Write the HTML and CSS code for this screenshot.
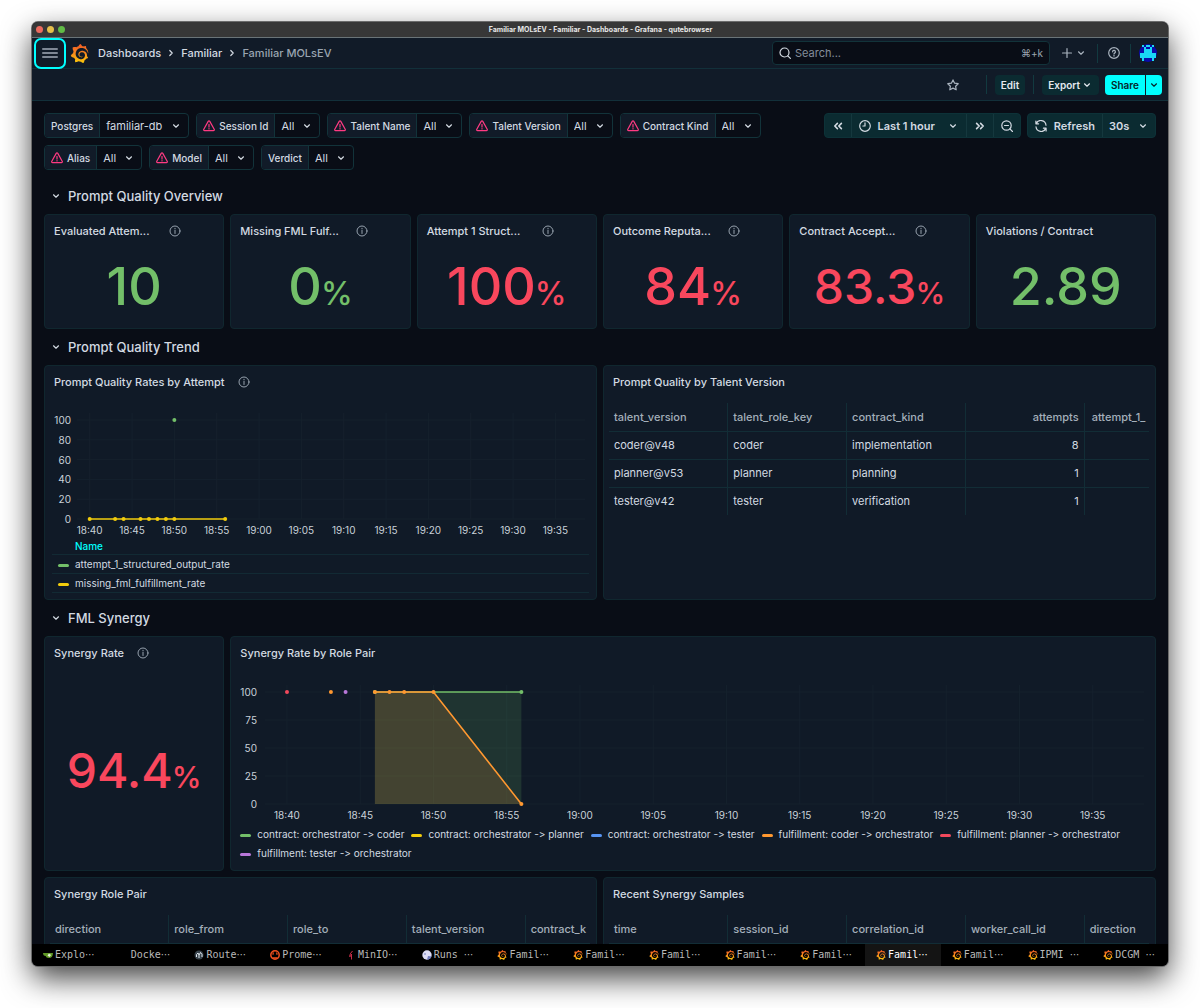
FILE: index.html
```html
<!DOCTYPE html>
<html lang="en">
<head>
  <meta charset="UTF-8" />
  <meta name="viewport" content="width=device-width, initial-scale=1.0" />
  <title>Familiar MOLsEV - Familiar - Dashboards - Grafana</title>
  <link rel="stylesheet" href="styles.css">
</head>
<body>
  <!-- icon sprite -->
  <svg class="sprite" aria-hidden="true">
    <linearGradient id="flame" x1="0" y1="0" x2="0" y2="1">
      <stop offset="0" stop-color="#f05a28" />
      <stop offset="0.45" stop-color="#f7841d" />
      <stop offset="1" stop-color="#fbca0a" />
    </linearGradient>
    <symbol id="grafana" viewBox="0 0 24 24">
      <path fill="url(#flame)" d="M23.02 10.59a8.578 8.578 0 0 0-.862-3.034 8.911 8.911 0 0 0-1.789-2.445c.337-1.342-.413-2.505-.413-2.505-1.292-.08-2.113.4-2.416.62-.052-.02-.102-.044-.154-.064-.22-.089-.446-.172-.677-.247-.231-.073-.47-.14-.711-.197a9.867 9.867 0 0 0-.875-.161C14.557.753 12.94 0 12.94 0c-1.804 1.145-2.147 2.744-2.147 2.744l-.018.093c-.098.029-.2.057-.298.088-.138.042-.275.094-.413.143-.138.055-.275.107-.41.166a8.869 8.869 0 0 0-1.557.87l-.063-.029c-2.497-.955-4.716.195-4.716.195-.203 2.658.996 4.33 1.235 4.636a11.608 11.608 0 0 0-.607 2.635C1.636 12.677.953 15.014.953 15.014c1.926 2.214 4.171 2.351 4.171 2.351.003-.002.006-.002.006-.005.285.509.615.994.986 1.446.156.19.32.371.488.548-.704 2.009.099 3.68.099 3.68 2.144.08 3.553-.937 3.849-1.173a9.784 9.784 0 0 0 3.164.501h.08l.055-.003.107-.002.103-.005.003.002c1.01 1.44 2.788 1.646 2.788 1.646 1.264-1.332 1.337-2.653 1.337-2.94v-.058c0-.02-.003-.039-.003-.06.265-.187.52-.387.758-.6a7.875 7.875 0 0 0 1.415-1.7c1.43.083 2.437-.885 2.437-.885-.236-1.49-1.085-2.216-1.264-2.354l-.018-.013-.016-.013a.217.217 0 0 1-.031-.02c.008-.092.016-.18.02-.27.011-.162.016-.323.016-.48v-.253l-.005-.098-.008-.135a1.891 1.891 0 0 0-.01-.13c-.003-.042-.008-.083-.013-.125l-.016-.124-.018-.122a6.215 6.215 0 0 0-2.032-3.73 6.015 6.015 0 0 0-3.222-1.46 6.292 6.292 0 0 0-.85-.048l-.107.002h-.063l-.044.003-.104.008a4.777 4.777 0 0 0-3.335 1.695c-.332.4-.592.84-.768 1.297a4.594 4.594 0 0 0-.312 1.817l.003.091c.005.055.007.11.013.164a3.615 3.615 0 0 0 .698 1.82 3.53 3.53 0 0 0 1.827 1.282c.33.098.66.14.971.137.039 0 .078 0 .114-.002l.063-.003c.02 0 .041-.003.062-.003.034-.002.065-.007.099-.01.007 0 .018-.003.028-.003l.031-.005.06-.008a1.18 1.18 0 0 0 .112-.02c.036-.008.072-.013.109-.024a2.634 2.634 0 0 0 .914-.415c.028-.02.056-.041.085-.065a.248.248 0 0 0 .039-.35.244.244 0 0 0-.309-.06l-.078.042c-.09.044-.184.083-.283.116a2.476 2.476 0 0 1-.475.096c-.028.003-.054.006-.083.006l-.083.002c-.026 0-.054 0-.08-.002l-.102-.006h-.012l-.024.006c-.016-.003-.031-.003-.044-.006-.031-.002-.06-.007-.091-.01a2.59 2.59 0 0 1-.724-.213 2.557 2.557 0 0 1-.667-.438 2.52 2.52 0 0 1-.805-1.475 2.306 2.306 0 0 1-.029-.444l.006-.122v-.023l.002-.031c.003-.021.003-.04.005-.06a3.163 3.163 0 0 1 1.352-2.29 3.12 3.12 0 0 1 .937-.43 2.946 2.946 0 0 1 .776-.101h.06l.07.002.045.003h.026l.07.005a4.041 4.041 0 0 1 1.635.49 3.94 3.94 0 0 1 1.602 1.662 3.77 3.77 0 0 1 .397 1.414l.005.076.003.075c.002.026.002.05.002.075 0 .024.003.052 0 .07v.065l-.002.073-.008.174a6.195 6.195 0 0 1-.08.639 5.1 5.1 0 0 1-.267.927 5.31 5.31 0 0 1-.624 1.13 5.052 5.052 0 0 1-3.237 2.014 4.82 4.82 0 0 1-.649.066l-.039.003h-.287a6.607 6.607 0 0 1-1.716-.265 6.776 6.776 0 0 1-3.4-2.274 6.75 6.75 0 0 1-.746-1.15 6.616 6.616 0 0 1-.714-2.596l-.005-.083-.002-.02v-.056l-.003-.073v-.096l-.003-.104v-.07l.003-.163c.008-.22.026-.45.054-.678a8.707 8.707 0 0 1 .28-1.355c.128-.444.286-.872.473-1.277a7.04 7.04 0 0 1 1.456-2.1 5.925 5.925 0 0 1 .953-.763c.169-.111.343-.213.524-.306.089-.05.182-.091.273-.135.047-.02.093-.042.138-.062a7.177 7.177 0 0 1 .714-.267l.145-.045c.049-.015.098-.026.148-.041.098-.029.197-.052.296-.076.049-.013.1-.02.15-.033l.15-.032.151-.028.076-.013.075-.01.153-.024c.057-.01.114-.013.171-.023l.169-.021c.036-.003.073-.008.106-.01l.073-.008.036-.003.042-.002c.057-.003.114-.008.171-.01l.086-.006h.023l.037-.003.145-.007a7.999 7.999 0 0 1 1.708.125 7.917 7.917 0 0 1 2.048.68 8.253 8.253 0 0 1 1.672 1.09l.09.077.089.078c.06.052.114.107.171.159.057.052.112.106.166.16.052.055.107.107.159.164a8.671 8.671 0 0 1 1.41 1.978c.012.026.028.052.04.078l.04.078.075.156c.023.051.05.1.07.153l.065.15a8.848 8.848 0 0 1 .45 1.34.19.19 0 0 0 .201.142.186.186 0 0 0 .172-.184c.01-.246.002-.532-.024-.856z" />
    </symbol>
    <symbol id="menu" viewBox="0 0 16 12"><path d="M.8 2h14.400M.8 6h14.400M.8 10h14.400" /></symbol>
    <symbol id="down" viewBox="0 0 12 12"><path d="M3.5 4.8 6 7.2l2.5-2.4" /></symbol>
    <symbol id="right" viewBox="0 0 12 12"><path d="M4.8 3.5 7.2 6 4.8 8.5" /></symbol>
    <symbol id="search" viewBox="0 0 12 12"><circle cx="5.5" cy="5.5" r="4.5" /><path d="m8.8 8.8 2.6 2.6" /></symbol>
    <symbol id="zoom-out" viewBox="0 0 12 12"><circle cx="5.5" cy="5.5" r="4.7" /><path d="m8.9 8.9 2.6 2.6M3.5 5.5h4" /></symbol>
    <symbol id="plus" viewBox="0 0 12 12"><path d="M6 1.5v9M1.5 6h9" /></symbol>
    <symbol id="help" viewBox="0 0 12 12"><circle cx="6" cy="6" r="5.3" /><path d="M4.6 4.8a1.4 1.4 0 1 1 2 1.3c-.4.2-.6.4-.6.8M6 8.3v.8" /></symbol>
    <symbol id="info" viewBox="0 0 12 12"><circle cx="6" cy="6" r="5" /><path d="M6 5.4v3.1M6 3.3v.6" /></symbol>
    <symbol id="star" viewBox="0 0 12 12"><path d="m6 .9 1.6 3.3 3.6.5-2.6 2.5.6 3.6L6 9.1l-3.200 1.700.6-3.600L.8 4.700l3.600-.5z" /></symbol>
    <symbol id="warn" viewBox="0 0 12 12"><path d="M5.2 1.4.8 9.3c-.4.7 0 1.4.8 1.4h8.8c.8 0 1.2-.7.8-1.4L6.8 1.4c-.4-.6-1.2-.6-1.6 0zM6 4.4v2.7M6 8.6v.4" /></symbol>
    <symbol id="clock" viewBox="0 0 12 12"><circle cx="6" cy="6" r="5.3" /><path d="M6 2.8V6H3.9" /></symbol>
    <symbol id="back" viewBox="0 0 12 12"><path d="M5.4 3.4 2.8 6l2.6 2.6M9.4 3.4 6.8 6l2.6 2.6" /></symbol>
    <symbol id="forward" viewBox="0 0 12 12"><path d="M2.6 3.4 5.2 6 2.6 8.6M6.6 3.4 9.2 6 6.6 8.6" /></symbol>
    <symbol id="sync" viewBox="0 0 12 12"><path d="M.9 1.1v2.7h2.7M1.2 3.7a5.1 5.1 0 0 1 9.8 1.5M11.1 10.9V8.2H8.4M10.8 8.3A5.1 5.1 0 0 1 1 6.8" /></symbol>
  </svg>

  <div class="window">
    <div class="titlebar">
      <div class="lights"><i class="red"></i><i class="yellow"></i><i class="green"></i></div>
      <span>Familiar MOLsEV - Familiar - Dashboards - Grafana - qutebrowser</span>
    </div>

    <header class="topbar">
      <button class="menu-btn" aria-label="Menu"><svg class="icon menu-icon"><use href="#menu" /></svg></button>
      <a href="#" class="logo" aria-label="Grafana"><svg class="logo-icon"><use href="#grafana" /></svg></a>
      <nav class="crumbs">
        <a href="#">Dashboards</a>
        <svg class="icon"><use href="#right" /></svg>
        <a href="#">Familiar</a>
        <svg class="icon"><use href="#right" /></svg>
        <span>Familiar MOLsEV</span>
      </nav>
      <label class="search">
        <svg class="icon"><use href="#search" /></svg>
        <input type="text" placeholder="Search..." aria-label="Search">
        <kbd>⌘+k</kbd>
      </label>
      <button class="plain add-btn" aria-label="New"><svg class="icon"><use href="#plus" /></svg><svg class="icon"><use href="#down" /></svg></button>
      <span class="divider"></span>
      <button class="plain" aria-label="Help"><svg class="icon"><use href="#help" /></svg></button>
      <span class="divider"></span>
      <button class="plain" aria-label="Profile">
        <svg class="avatar" viewBox="0 0 18 18">
          <circle cx="9" cy="9" r="9" fill="#0a0aa8" />
          <path fill="#19d7f5" d="M3 1h2v2H3zM7 1h4v2H7zM13 1h2v2h-2zM5 3h2v2H5zM11 3h2v2h-2zM5 5h8v4h4v5h-2v3h-2v-3H5v3H3v-3H1V9h4z" />
        </svg>
      </button>
    </header>

    <div class="toolbar">
      <button class="plain star" aria-label="Mark as favorite"><svg class="icon"><use href="#star" /></svg></button>
      <span class="divider"></span>
      <button class="btn">Edit</button>
      <span class="divider"></span>
      <button class="btn">Export <svg class="icon"><use href="#down" /></svg></button>
      <div class="share">
        <button class="btn">Share</button>
        <button class="btn caret" aria-label="Share options"><svg class="icon"><use href="#down" /></svg></button>
      </div>
    </div>

    <main class="content">
      <div class="controls">
        <div class="variables">
          <div class="variable">
            <label for="v-postgres">Postgres</label>
            <div class="pick"><select id="v-postgres"><option>familiar-db</option></select><svg class="icon"><use href="#down" /></svg></div>
          </div>
          <div class="variable">
            <label for="v-session"><svg class="icon warn"><use href="#warn" /></svg>Session Id</label>
            <div class="pick"><select id="v-session"><option>All</option></select><svg class="icon"><use href="#down" /></svg></div>
          </div>
          <div class="variable">
            <label for="v-talent"><svg class="icon warn"><use href="#warn" /></svg>Talent Name</label>
            <div class="pick"><select id="v-talent"><option>All</option></select><svg class="icon"><use href="#down" /></svg></div>
          </div>
          <div class="variable">
            <label for="v-version"><svg class="icon warn"><use href="#warn" /></svg>Talent Version</label>
            <div class="pick"><select id="v-version"><option>All</option></select><svg class="icon"><use href="#down" /></svg></div>
          </div>
          <div class="variable">
            <label for="v-contract"><svg class="icon warn"><use href="#warn" /></svg>Contract Kind</label>
            <div class="pick"><select id="v-contract"><option>All</option></select><svg class="icon"><use href="#down" /></svg></div>
          </div>
          <div class="variable">
            <label for="v-alias"><svg class="icon warn"><use href="#warn" /></svg>Alias</label>
            <div class="pick"><select id="v-alias"><option>All</option></select><svg class="icon"><use href="#down" /></svg></div>
          </div>
          <div class="variable">
            <label for="v-model"><svg class="icon warn"><use href="#warn" /></svg>Model</label>
            <div class="pick"><select id="v-model"><option>All</option></select><svg class="icon"><use href="#down" /></svg></div>
          </div>
          <div class="variable">
            <label for="v-verdict">Verdict</label>
            <div class="pick"><select id="v-verdict"><option>All</option></select><svg class="icon"><use href="#down" /></svg></div>
          </div>
        </div>
        <div class="time">
          <div class="btn-group">
            <button aria-label="Move back"><svg class="icon bold"><use href="#back" /></svg></button>
            <button class="range"><svg class="icon"><use href="#clock" /></svg>Last 1 hour<svg class="icon caret-icon"><use href="#down" /></svg></button>
            <button aria-label="Move forward"><svg class="icon bold"><use href="#forward" /></svg></button>
            <button aria-label="Zoom out"><svg class="icon"><use href="#zoom-out" /></svg></button>
          </div>
          <div class="btn-group">
            <button><svg class="icon"><use href="#sync" /></svg>Refresh</button>
            <div class="pick"><select aria-label="Refresh interval"><option>30s</option></select><svg class="icon"><use href="#down" /></svg></div>
          </div>
        </div>
      </div>

      <div class="grid">
        <button class="row-title"><svg class="icon"><use href="#down" /></svg>Prompt Quality Overview</button>

        <section class="panel stat">
          <header><h2 class="short">Evaluated Attem...</h2><svg class="icon"><use href="#info" /></svg></header>
          <p class="value ok">10</p>
        </section>
        <section class="panel stat">
          <header><h2 class="short">Missing FML Fulf...</h2><svg class="icon"><use href="#info" /></svg></header>
          <p class="value ok">0<small>%</small></p>
        </section>
        <section class="panel stat">
          <header><h2 class="short">Attempt 1 Struct...</h2><svg class="icon"><use href="#info" /></svg></header>
          <p class="value bad">100<small>%</small></p>
        </section>
        <section class="panel stat">
          <header><h2 class="short">Outcome Reputa...</h2><svg class="icon"><use href="#info" /></svg></header>
          <p class="value bad">84<small>%</small></p>
        </section>
        <section class="panel stat">
          <header><h2 class="short">Contract Accept...</h2><svg class="icon"><use href="#info" /></svg></header>
          <p class="value long bad">83.3<small>%</small></p>
        </section>
        <section class="panel stat">
          <header><h2>Violations / Contract</h2></header>
          <p class="value ok">2.89</p>
        </section>

        <button class="row-title"><svg class="icon"><use href="#down" /></svg>Prompt Quality Trend</button>

        <section class="panel half tall">
          <header><h2>Prompt Quality Rates by Attempt</h2><svg class="icon"><use href="#info" /></svg></header>
          <svg class="chart" id="ratesChart"></svg>
          <table class="legend-table">
            <thead><tr><th>Name</th></tr></thead>
            <tbody>
              <tr><td><i class="swatch c-green"></i>attempt_1_structured_output_rate</td></tr>
              <tr><td><i class="swatch c-yellow"></i>missing_fml_fulfillment_rate</td></tr>
            </tbody>
          </table>
        </section>
        <section class="panel half tall">
          <header><h2>Prompt Quality by Talent Version</h2></header>
          <div class="table-wrap">
            <table class="data">
              <thead>
                <tr><th>talent_version</th><th>talent_role_key</th><th>contract_kind</th><th class="num">attempts</th><th class="last num-last">attempt_1_</th></tr>
              </thead>
              <tbody>
                <tr><td>coder@v48</td><td>coder</td><td>implementation</td><td class="num">8</td><td></td></tr>
                <tr><td>planner@v53</td><td>planner</td><td>planning</td><td class="num">1</td><td></td></tr>
                <tr><td>tester@v42</td><td>tester</td><td>verification</td><td class="num">1</td><td></td></tr>
              </tbody>
            </table>
          </div>
        </section>

        <button class="row-title"><svg class="icon"><use href="#down" /></svg>FML Synergy</button>

        <section class="panel stat tall">
          <header><h2>Synergy Rate</h2><svg class="icon"><use href="#info" /></svg></header>
          <p class="value long bad">94.4<small>%</small></p>
        </section>
        <section class="panel rest tall">
          <header><h2>Synergy Rate by Role Pair</h2></header>
          <svg class="chart" id="synergyChart"></svg>
          <ul class="legend">
            <li><i class="swatch c-green"></i>contract: orchestrator -&gt; coder</li>
            <li><i class="swatch c-yellow"></i>contract: orchestrator -&gt; planner</li>
            <li><i class="swatch c-blue"></i>contract: orchestrator -&gt; tester</li>
            <li><i class="swatch c-orange"></i>fulfillment: coder -&gt; orchestrator</li>
            <li><i class="swatch c-red"></i>fulfillment: planner -&gt; orchestrator</li>
            <li><i class="swatch c-purple"></i>fulfillment: tester -&gt; orchestrator</li>
          </ul>
        </section>

        <section class="panel half tall">
          <header><h2>Synergy Role Pair</h2></header>
          <div class="table-wrap">
            <table class="data">
              <thead><tr><th>direction</th><th>role_from</th><th>role_to</th><th>talent_version</th><th class="last">contract_k</th></tr></thead>
            </table>
          </div>
        </section>
        <section class="panel half tall">
          <header><h2>Recent Synergy Samples</h2></header>
          <div class="table-wrap">
            <table class="data">
              <thead><tr><th>time</th><th>session_id</th><th>correlation_id</th><th>worker_call_id</th><th class="last">direction</th></tr></thead>
            </table>
          </div>
        </section>
      </div>
    </main>

    <nav class="tabs">
      <a href="#"><svg viewBox="0 0 10 10"><path fill="#609926" d="M0 3h10c0 3-1.500 5-4 5-2 0-3-1-3.300-2C1 6 0 5 0 3z" /><path fill="#e8f3dc" d="m6 3.500 2 1.500-1.500 2-2-1.500z" /></svg>Explo<b>⋯</b></a>
      <a href="#"><svg viewBox="0 0 10 10"></svg>Docke<b>⋯</b></a>
      <a href="#"><svg viewBox="0 0 10 10"><circle cx="5" cy="5" r="4.500" fill="#39444d" /><path d="M2.500 7V4.500L4 3l1 2 1.500-2.500L8 4.500V7M5 5v3" fill="none" stroke="#dfe7ee" /></svg>Route<b>⋯</b></a>
      <a href="#"><svg viewBox="0 0 10 10"><circle cx="5" cy="5" r="4.200" fill="#000" stroke="#f0501f" stroke-width="1.500" /><path fill="#f0501f" d="M2.500 7.200h5v1.600h-5zM2 4.500l1.300-2.700L4 4.500zM8 4.500 6.700 1.800 6 4.500z" /></svg>Prome<b>⋯</b></a>
      <a href="#"><svg viewBox="0 0 10 10"><path d="M6.500 1 4.500 3.500 6 5 4.500 6M4.500 3.500 3.500 6.500l2-1V9.500" fill="none" stroke="#c72c48" /></svg>MinIO<b>⋯</b></a>
      <a href="#"><svg viewBox="0 0 10 10"><circle cx="5" cy="5" r="4.700" fill="#dcdcf5" /><path fill="#6d78b8" d="M5 9.700 6 6l3.500.5C9 8.500 7 9.700 5 9.700zM2 3.500h2v1H2z" /></svg>Runs <b>⋯</b></a>
      <a href="#"><svg><use href="#grafana" /></svg>Famil<b>⋯</b></a>
      <a href="#"><svg><use href="#grafana" /></svg>Famil<b>⋯</b></a>
      <a href="#"><svg><use href="#grafana" /></svg>Famil<b>⋯</b></a>
      <a href="#"><svg><use href="#grafana" /></svg>Famil<b>⋯</b></a>
      <a href="#"><svg><use href="#grafana" /></svg>Famil<b>⋯</b></a>
      <a href="#" class="active"><svg><use href="#grafana" /></svg>Famil<b>⋯</b></a>
      <a href="#"><svg><use href="#grafana" /></svg>Famil<b>⋯</b></a>
      <a href="#"><svg><use href="#grafana" /></svg>IPMI <b>⋯</b></a>
      <a href="#"><svg><use href="#grafana" /></svg>DCGM <b>⋯</b></a>
    </nav>
  </div>

  <script src="charts.js"></script>
</body>
</html>
```
FILE: styles.css
```css
* {
  box-sizing: border-box;
}
body {
  margin: 0;
  padding: 22px 32px 42px;
  height: 100vh;
  background: #fff;
  color: #d3dae2;
  font-family: Inter, "Liberation Sans", sans-serif;
  font-size: 11px;
  line-height: 16px;
}
button,
select,
input {
  font: inherit;
  color: inherit;
  background: none;
  border: 0;
  margin: 0;
  padding: 0;
}
button {
  cursor: pointer;
}
a {
  color: inherit;
  text-decoration: none;
}
h2,
p,
ul {
  margin: 0;
  padding: 0;
}
.sprite {
  position: absolute;
  width: 0;
  height: 0;
}
.icon {
  width: 12px;
  height: 12px;
  flex: none;
  fill: none;
  stroke: currentColor;
  stroke-width: 1.2;
  stroke-linecap: round;
  stroke-linejoin: round;
}
.bold {
  stroke-width: 1.6;
}

/* browser window */
.window {
  height: 100%;
  display: flex;
  flex-direction: column;
  overflow: hidden;
  border-radius: 6px;
  background: #090d16;
  box-shadow: 0 0 0 1px #6b6b6b, 0 12px 30px rgba(0, 0, 0, 0.75);
}
.titlebar {
  display: flex;
  align-items: center;
  flex: none;
  height: 16px;
  padding: 0 4px;
  background: #373737;
  border-bottom: 1px solid #6a7478;
  color: #e6e6e6;
  font-size: 7px;
  font-weight: 700;
}
.titlebar span {
  flex: 1;
  text-align: center;
  padding-right: 28px;
}
.lights {
  display: flex;
  gap: 4px;
}
.lights i {
  width: 7px;
  height: 7px;
  border-radius: 50%;
}
.red {
  background: #ec6a5e;
}
.yellow {
  background: #e5bf4b;
}
.green {
  background: #61bb46;
}

/* top navigation */
.topbar,
.toolbar {
  display: flex;
  align-items: center;
  flex: none;
  padding: 0 11px 0 2px;
  background: #111b28;
  border-bottom: 1px solid #12303a;
}
.topbar {
  height: 31px;
}
.toolbar {
  height: 32px;
  padding-right: 6px;
  justify-content: flex-end;
}
.menu-btn {
  display: flex;
  align-items: center;
  justify-content: center;
  width: 32px;
  height: 31px;
  border: 2px solid #0ff;
  border-radius: 7px;
  color: #a3acb8;
}
.menu-icon {
  width: 16px;
  stroke-width: 1.6;
}
.logo {
  display: flex;
  margin: 0 9px 0 4px;
}
.logo-icon {
  width: 19px;
  height: 19px;
}
.crumbs {
  display: flex;
  align-items: center;
  flex: 1;
  gap: 4px;
  font-size: 11px;
  font-weight: 500;
}
.crumbs span {
  color: #9aa5b1;
}
.search {
  display: flex;
  align-items: center;
  gap: 4px;
  width: 278px;
  height: 24px;
  padding: 0 6px;
  margin-right: 11px;
  border: 1px solid #12333a;
  border-radius: 4px;
  background: #090d16;
}
.search input {
  flex: 1;
  min-width: 0;
  outline: 0;
}
.search input::placeholder {
  color: #848e9a;
  opacity: 1;
}
.search kbd {
  font-family: Inter, "DejaVu Sans", sans-serif;
  font-size: 10px;
  color: #9aa5b1;
}
.plain {
  display: flex;
  color: #a9b3be;
}
.add-btn {
  gap: 2px;
}
.divider {
  width: 1px;
  height: 19px;
  margin: 0 10px;
  background: #123a40;
}
.topbar .divider + .plain:last-child {
  margin-left: -2px;
}
.avatar {
  width: 18px;
  height: 18px;
}
.toolbar .star {
  margin-right: 19px;
}
.btn {
  display: flex;
  align-items: center;
  gap: 1px;
  height: 20px;
  padding: 0 6px;
  border-radius: 4px;
  background: #0b2b31;
  color: #e4e9ee;
  font-size: 10px;
  font-weight: 600;
}
.toolbar .divider {
  margin: 0 8px;
}
.share {
  display: flex;
  gap: 1px;
  margin-left: 6px;
}
.share .btn {
  background: #0ff;
  color: #06252b;
  border-radius: 4px 0 0 4px;
}
.share .caret {
  padding: 0 2px;
  border-radius: 0 4px 4px 0;
}

/* variables and time range */
.content {
  flex: 1;
  min-height: 0;
  overflow: hidden;
  padding: 12px;
}
.controls {
  display: flex;
  align-items: flex-start;
  gap: 7px;
  margin-bottom: 14px;
}
.variables {
  display: flex;
  flex: 1;
  flex-wrap: wrap;
  gap: 7px;
}
.variable {
  display: flex;
  height: 25px;
  border: 1px solid #12333a;
  border-radius: 4px;
  overflow: hidden;
}
.variable label {
  display: flex;
  align-items: center;
  gap: 4px;
  padding: 0 6px;
  background: #111b28;
  border-right: 1px solid #12333a;
  font-size: 10px;
  font-weight: 500;
}
.warn {
  color: #ff3a82;
}
.pick {
  position: relative;
  display: flex;
}
.pick select {
  appearance: none;
  padding: 0 25px 0 6px;
  font-size: 11px;
  cursor: pointer;
}
.pick .icon {
  position: absolute;
  top: 6px;
  right: 6px;
  pointer-events: none;
}
.time {
  display: flex;
  gap: 6px;
  font-weight: 600;
}
.btn-group {
  display: flex;
  height: 25px;
  border: 1px solid #0d3238;
  border-radius: 4px;
  background: #0b2b31;
}
.btn-group > * {
  display: flex;
  align-items: center;
  gap: 7px;
  padding: 0 7px;
}
.btn-group > * + * {
  border-left: 1px solid #15383e;
}
.btn-group .pick {
  padding: 0;
}
.caret-icon {
  margin-left: 5px;
}

/* dashboard grid */
.grid {
  display: grid;
  grid-template-columns: repeat(6, minmax(0, 1fr));
  gap: 6px;
}
.row-title {
  grid-column: 1 / -1;
  display: flex;
  align-items: center;
  gap: 6px;
  height: 24px;
  padding: 0 6px;
  font-size: 13px;
  font-weight: 500;
}
.panel {
  display: flex;
  flex-direction: column;
  min-height: 115px;
  border: 1px solid #10272f;
  border-radius: 4px;
  background: #101a27;
  overflow: hidden;
}
.half {
  grid-column: span 3;
}
.rest {
  grid-column: span 5;
}
.tall {
  min-height: 235px;
}
.panel header {
  display: flex;
  align-items: center;
  gap: 13px;
  flex: none;
  height: 32px;
  padding: 0 42px 0 9px;
}
.panel header .icon {
  color: #97a2ae;
  stroke-width: 1;
}
.panel h2 {
  font-size: 11px;
  font-weight: 500;
  white-space: nowrap;
}
.panel h2.short {
  flex: 1;
}
.value {
  flex: 1;
  display: flex;
  align-items: baseline;
  justify-content: center;
  padding-top: 8px;
  font-size: 52px;
  line-height: 64px;
  font-weight: 500;
}
.value small {
  font-size: 32px;
  margin-left: -1px;
}
.value.long {
  font-size: 48px;
}
.value.long small {
  font-size: 30px;
}
.tall .value {
  padding-top: 70px;
}
.ok {
  color: #73bf69;
}
.bad {
  color: #f9475d;
}

/* charts */
.chart {
  display: block;
  width: 100%;
  height: 142px;
  font-size: 10px;
}
.rest .chart {
  height: 157px;
}
.chart text {
  fill: #c9d1d9;
}
.chart .grid-line {
  stroke: #15212d;
}
.legend-table {
  width: calc(100% - 14px);
  margin: 0 7px;
  border-collapse: collapse;
  font-size: 10px;
  line-height: 16px;
}
.legend-table th {
  padding: 0 0 2px 23px;
  color: #0ff;
  font-weight: 500;
  text-align: left;
  line-height: 12px;
}
.legend-table td {
  height: 19px;
  padding: 0 6px;
  border-top: 1px solid #122a34;
  border-bottom: 1px solid #122a34;
}
.swatch {
  display: inline-block;
  width: 11px;
  height: 3px;
  margin-right: 6px;
  border-radius: 2px;
  vertical-align: middle;
}
.legend {
  display: flex;
  flex-wrap: wrap;
  gap: 3px 7px;
  padding: 0 9px;
  list-style: none;
  font-size: 10px;
  font-feature-settings: "calt" 0;
}
.c-green {
  background: #73bf69;
}
.c-yellow {
  background: #f2cc0c;
}
.c-blue {
  background: #5794f2;
}
.c-orange {
  background: #ff9830;
}
.c-red {
  background: #f2495c;
}
.c-purple {
  background: #b877d9;
}

/* tables */
.table-wrap {
  margin: 5px 6px 0 5px;
}
.data {
  table-layout: fixed;
  width: 100%;
  border-collapse: collapse;
  font-size: 11px;
}
.data th,
.data td {
  width: 22%;
  height: 28px;
  padding: 0 5px;
  text-align: left;
  font-weight: 400;
  border-bottom: 1px solid #122d36;
  border-right: 1px solid #122d36;
}
.data th {
  font-weight: 500;
  color: #a4afba;
}
.data tr:last-child td {
  border-bottom: 0;
}
.data th.last {
  width: 12%;
  padding-right: 0;
}
.data th:last-child,
.data td:last-child {
  border-right: 0;
}
.data th.num-last {
  padding-left: 7px;
}
.data th.num,
.data td.num {
  text-align: right;
}

/* tab strip */
.tabs {
  display: flex;
  flex: none;
  height: 22px;
  background: #000;
  color: #b9b9b9;
  font-family: "DejaVu Sans Mono", "Liberation Mono", monospace;
  font-size: 10px;
}
.tabs a {
  display: flex;
  align-items: center;
  flex: 1 1 0;
  min-width: 0;
  padding-left: 11px;
  white-space: pre;
}
.tabs svg {
  width: 10px;
  height: 10px;
  margin-right: 2px;
}
.tabs b {
  font-family: "DejaVu Sans", sans-serif;
  font-weight: 400;
}
.tabs .active {
  background: #141414;
  color: #fff;
}
```
FILE: charts.js
```js
const NS = 'http://www.w3.org/2000/svg';

function add(svg, tag, attrs, text) {
  const el = document.createElementNS(NS, tag);
  for (const key in attrs) el.setAttribute(key, attrs[key]);
  if (text !== undefined) el.textContent = text;
  svg.appendChild(el);
}

// minutes are counted from 18:00, the range is the last hour
function clock(min) {
  return `${18 + Math.floor(min / 60)}:${String(min % 60).padStart(2, '0')}`;
}

function drawChart(id, opts) {
  const svg = document.getElementById(id);
  const left = opts.left;
  const right = svg.clientWidth - 11;
  const start = 38.5;
  const x = min => left + (min - start) / 60 * (right - left);
  const y = val => opts.bottom - val / 100 * (opts.bottom - opts.top);

  opts.ticks.forEach(val => {
    add(svg, 'line', { class: 'grid-line', x1: left, x2: right, y1: y(val), y2: y(val) });
    add(svg, 'text', { x: 26, y: y(val) + 4, 'text-anchor': 'end' }, val);
  });
  for (let min = 40; min <= 95; min += 5) {
    add(svg, 'line', { class: 'grid-line', x1: x(min), x2: x(min), y1: opts.top - 7, y2: opts.bottom });
    add(svg, 'text', { x: x(min), y: opts.bottom + 15, 'text-anchor': 'middle' }, clock(min));
  }

  opts.series.forEach(({ color, points, fill }) => {
    const line = points.map(([m, v]) => `${x(m)},${y(v)}`).join(' ');
    if (fill) {
      const first = x(points[0][0]);
      const last = x(points[points.length - 1][0]);
      add(svg, 'polygon', { points: `${first},${y(0)} ${line} ${last},${y(0)}`, fill: color, 'fill-opacity': 0.16 });
    }
    add(svg, 'polyline', { points: line, fill: 'none', stroke: color, 'stroke-width': 1.6 });
    points.forEach(([m, v]) => add(svg, 'circle', { cx: x(m), cy: y(v), r: 2, fill: color }));
  });
}

drawChart('ratesChart', {
  left: 32,
  top: 22,
  bottom: 121,
  ticks: [0, 20, 40, 60, 80, 100],
  series: [
    { color: '#73bf69', points: [[50, 100]] },
    { color: '#f2cc0c', points: [40, 43, 44, 46, 47, 48, 49, 50, 56].map(m => [m, 0]) }
  ]
});

drawChart('synergyChart', {
  left: 34,
  top: 23,
  bottom: 135,
  ticks: [0, 25, 50, 75, 100],
  series: [
    { color: '#73bf69', fill: true, points: [[46, 100], [56, 100]] },
    { color: '#f2495c', points: [[40, 100]] },
    { color: '#ff9830', points: [[43, 100]] },
    { color: '#b877d9', points: [[44, 100]] },
    { color: '#ff9830', fill: true, points: [[46, 100], [47, 100], [48, 100], [50, 100], [56, 0]] }
  ]
});
```
